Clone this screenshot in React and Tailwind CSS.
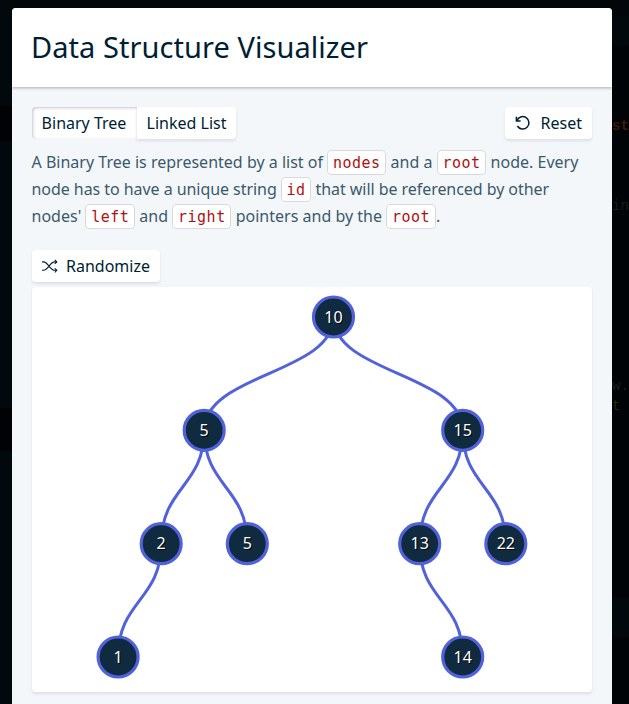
import React from "react";

const nodes = [
  { x: 301.5, y: 30, label: "10" },
  { x: 172.2, y: 143.3, label: "5" },
  { x: 430.7, y: 143.3, label: "15" },
  { x: 129.2, y: 256.7, label: "2" },
  { x: 215.3, y: 256.7, label: "5" },
  { x: 387.7, y: 256.7, label: "13" },
  { x: 473.8, y: 256.7, label: "22" },
  { x: 86.1, y: 370, label: "1" },
  { x: 430.7, y: 370, label: "14" },
];

const edges = [[0, 1], [0, 2], [1, 3], [1, 4], [2, 5], [2, 6], [3, 7], [5, 8]];

function linkPath(a, b) {
  const mid = (a.y + b.y) / 2;
  return `M${a.x} ${a.y}C${a.x} ${mid} ${b.x} ${mid} ${b.x} ${b.y}`;
}

function Code({ children }) {
  return (
    <code className="rounded border border-[#d9d9d9] bg-white px-[4.8px] pt-[3px] pb-[1.5px] font-['DejaVu_Sans_Mono',monospace] text-[15px] tracking-[0.5px] leading-5 text-[#b01011]">
      {children}
    </code>
  );
}

function ResetIcon() {
  return (
    <svg className="size-4 shrink-0" viewBox="0 0 16 16" fill="none" stroke="currentColor" strokeWidth="1.5">
      <path d="M1.4 1.8v4.1h4.2" />
      <path d="M1.9 5.7A6.2 6.2 0 1 1 2.4 11" />
    </svg>
  );
}

function ShuffleIcon() {
  return (
    <svg className="h-4 w-4 shrink-0" viewBox="0 0 16 16" fill="none" stroke="currentColor" strokeWidth="1.1">
      <path d="M0 3.9h1.5C6 3.9 8 12.3 12.6 12.3H15M0 12.3h1.5C6 12.3 8 3.9 12.6 3.9H15" />
      <path d="M12.8 1.9 14.8 3.9l-2 2M12.8 10.3l2 2-2 2" />
    </svg>
  );
}

function Tree() {
  return (
    <svg className="block h-[405px] w-[560px]" viewBox="0 0 560 405">
      {edges.map(([a, b]) => (
        <path key={`${a}-${b}`} d={linkPath(nodes[a], nodes[b])} fill="none" stroke="#5162db" strokeWidth="3" />
      ))}
      {nodes.map((n, i) => (
        <g key={i} className="font-['Noto_Sans',sans-serif] text-[16px]" textAnchor="middle">
          <circle cx={n.x} cy={n.y} r="20" fill="#102a40" stroke="#5162db" strokeWidth="3.2" />
          <text x={n.x + 1} y={n.y + 6.7} fill="#000">{n.label}</text>
          <text x={n.x} y={n.y + 5.7} fill="#fff">{n.label}</text>
        </g>
      ))}
    </svg>
  );
}

export default function App() {
  return (
    <div className="flex h-[704px] w-[629px] overflow-hidden bg-[#00060a] pt-2 font-['Noto_Sans',sans-serif] text-base text-[#001e33]">
      <div className="-mt-2 flex w-3 shrink-0 flex-col bg-[#02090d]">
        <div className="mt-[106px] h-[35px] bg-[#000203]" />
        <div className="mt-[267px] h-[43px] bg-[#000203]" />
      </div>
      <main className="w-[600px] shrink-0 overflow-hidden rounded-t bg-[#f3f7fa]">
        <header className="relative h-[79px] bg-white px-5 pt-[18px] shadow-[0_1px_3px_rgba(0,0,0,0.3)]">
          <h1 className="-ml-px whitespace-nowrap text-[29px] font-[430] leading-[42px] tracking-[0.06px]">Data Structure Visualizer</h1>
        </header>
        <div className="px-5 pt-5">
          <div className="flex justify-between">
            <div className="flex">
              <button className="h-8 w-[105px] rounded-l bg-white pr-px shadow-[inset_1px_1px_3px_rgba(25,25,70,0.25)]">Binary Tree</button>
              <button className="h-8 w-[99px] rounded-r bg-white shadow-[0_2px_3px_rgba(25,25,70,0.1)]">Linked List</button>
            </div>
            <button className="flex h-8 w-[87px] items-center gap-[9.5px] rounded bg-white pl-[10px] shadow-[0_2px_3px_rgba(25,25,70,0.1)]">
              <ResetIcon />
              Reset
            </button>
          </div>
          <div className="-ml-[0.5px] mt-[10px] whitespace-nowrap leading-[27px] text-[#3c596b]">
            <p className="tracking-[0.01px]">
              A Binary Tree is represented by a list of <Code>nodes</Code> and a <Code>root</Code> node. Every
            </p>
            <p className="tracking-[-0.055px]">
              node has to have a unique string <Code>id</Code> that will be referenced by other
            </p>
            <p className="tracking-[0.01px]">
              nodes' <Code>left</Code> and <Code>right</Code> pointers and by the <Code>root</Code>.
            </p>
          </div>
          <button className="mt-5 flex h-8 w-32 items-center gap-2 rounded bg-white pl-[10px] shadow-[0_2px_3px_rgba(25,25,70,0.1)]">
            <ShuffleIcon />
            Randomize
          </button>
          <div className="mt-[5px] h-[405px] rounded bg-white shadow-[0_2px_3px_rgba(25,25,70,0.1)]">
            <Tree />
          </div>
        </div>
      </main>
      <aside className="-mt-2 w-[17px] shrink-0 bg-[#000406] font-['Liberation_Mono',monospace] text-[14px] leading-5">
        <div className="h-4 bg-[#00060a]" />
        <div className="h-[30px] bg-[#02090d]" />
        <div className="mt-[70px] font-bold text-[#3d1b07]">st</div>
        <div className="mt-[60px] text-[#171b1d]">in</div>
        <div className="mt-[160px] text-[#191e20]">w.</div>
        <div className="text-[#222f03]">t</div>
        <div className="mt-[181px] h-10 bg-[#02090d]" />
      </aside>
    </div>
  );
}
